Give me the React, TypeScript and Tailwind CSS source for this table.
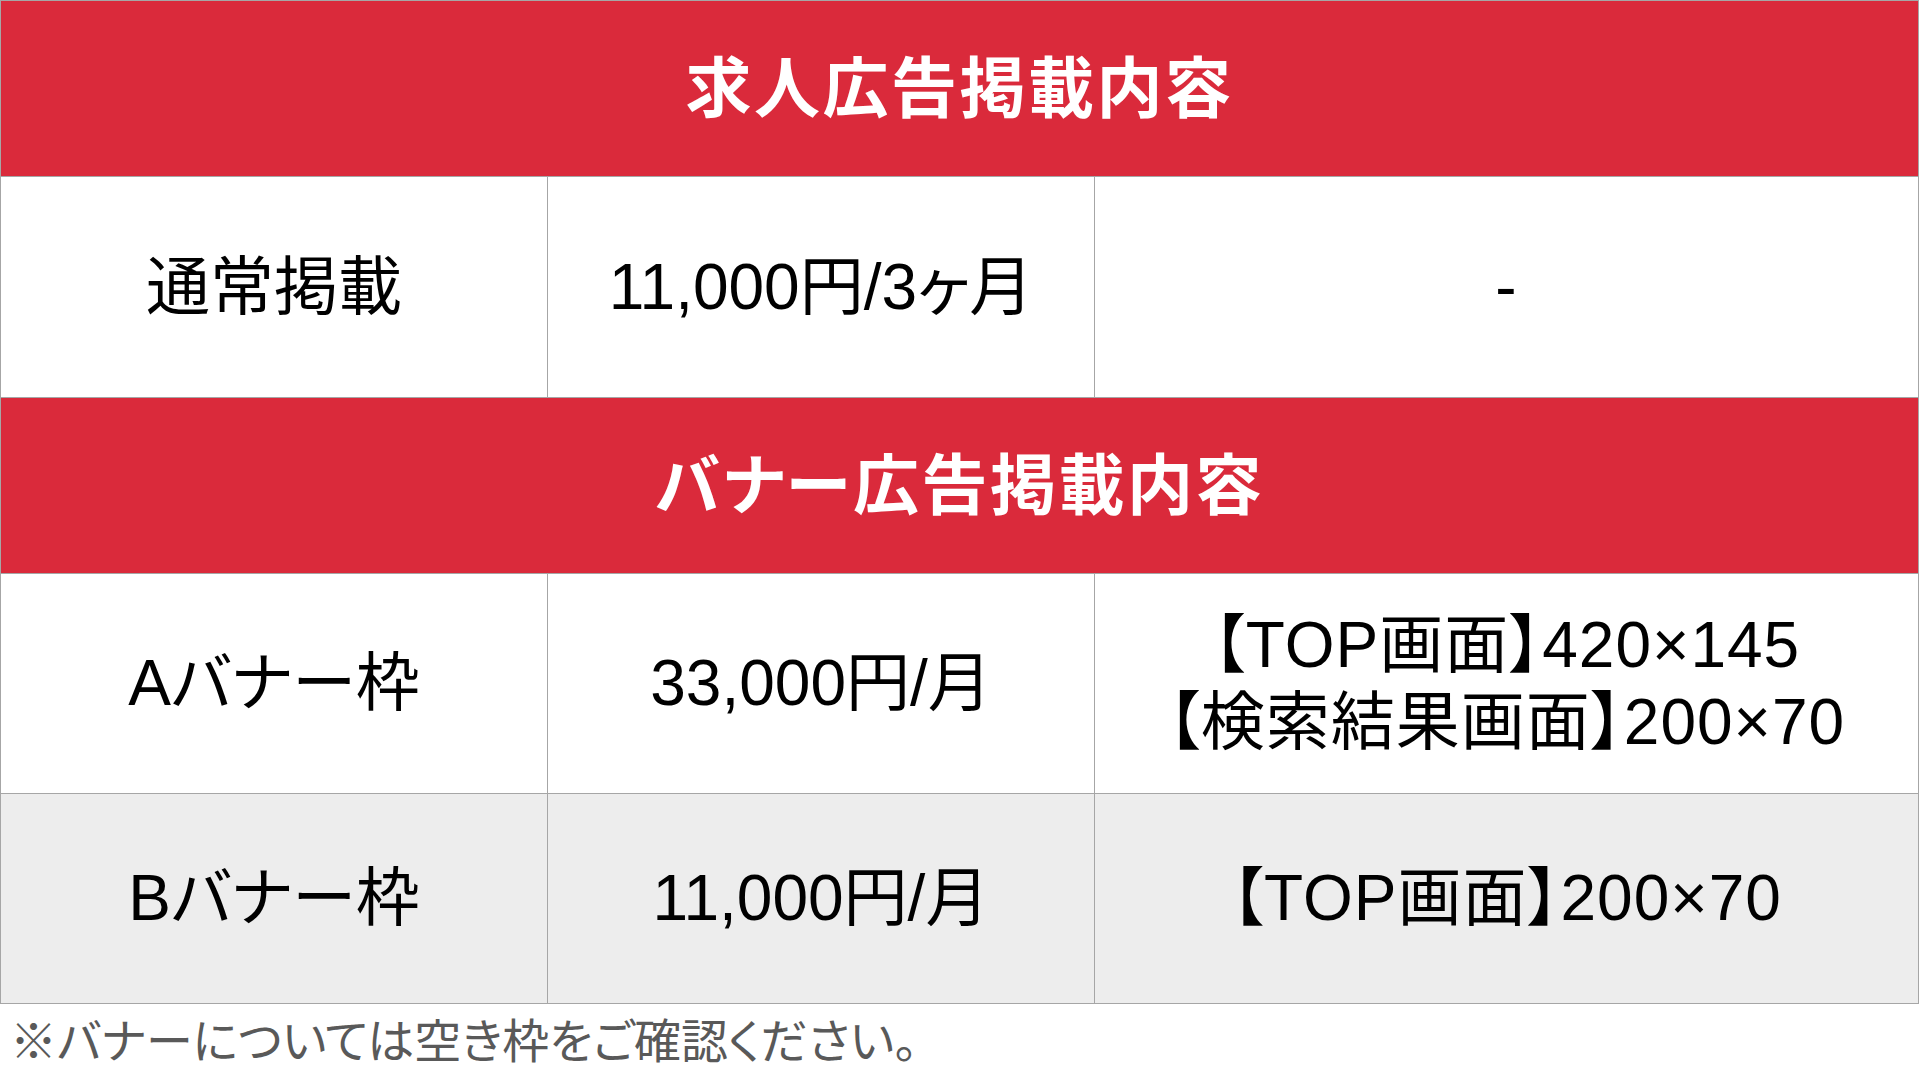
import React from "react";

const font = { fontFamily: '"Liberation Sans", "Noto Sans CJK JP", sans-serif' };

function Header({ children }: { children: React.ReactNode }) {
  return (
    <div className="h-[176px] bg-[#da2a3b] flex items-center justify-center border-b border-[#a6a6a6]">
      <span className="text-white font-bold text-[66px] leading-none [font-feature-settings:'palt'] tracking-[2.5px]">
        {children}
      </span>
    </div>
  );
}

function Row({
  h,
  bg,
  cells,
}: {
  h: string;
  bg: string;
  cells: React.ReactNode[];
}) {
  return (
    <div className={`grid grid-cols-[547px_547px_1fr] border-b border-[#a6a6a6] ${h} ${bg}`}>
      {cells.map((c, i) => (
        <div
          key={i}
          className={`flex items-center justify-center text-center text-black text-[64px] leading-[77px] [font-feature-settings:'palt'] ${
            i < 2 ? "border-r border-[#a6a6a6]" : "tracking-[1px]"
          }`}
        >
          {c}
        </div>
      ))}
    </div>
  );
}

export default function App() {
  return (
    <div className="w-[1919px] h-[1080px] bg-white overflow-hidden" style={font}>
      <div className="border-l border-r border-t border-[#a6a6a6]">
        <Header>求人広告掲載内容</Header>
        <Row h="h-[221px]" bg="bg-white" cells={["通常掲載", "11,000円/3ヶ月", "-"]} />
        <Header>バナー広告掲載内容</Header>
        <Row
          h="h-[220px]"
          bg="bg-white"
          cells={[
            "Aバナー枠",
            "33,000円/月",
            <div key="a">
              <div>【TOP画面】420×145</div>
              <div>【検索結果画面】200×70</div>
            </div>,
          ]}
        />
        <Row
          h="h-[210px]"
          bg="bg-[#ededed]"
          cells={["Bバナー枠", "11,000円/月", "【TOP画面】200×70"]}
        />
      </div>
      <div className="pl-[10px] pt-[6px] text-[47px] leading-[64px] text-[#595959] [font-feature-settings:'palt']">
        ※バナーについては空き枠をご確認ください。
      </div>
    </div>
  );
}
